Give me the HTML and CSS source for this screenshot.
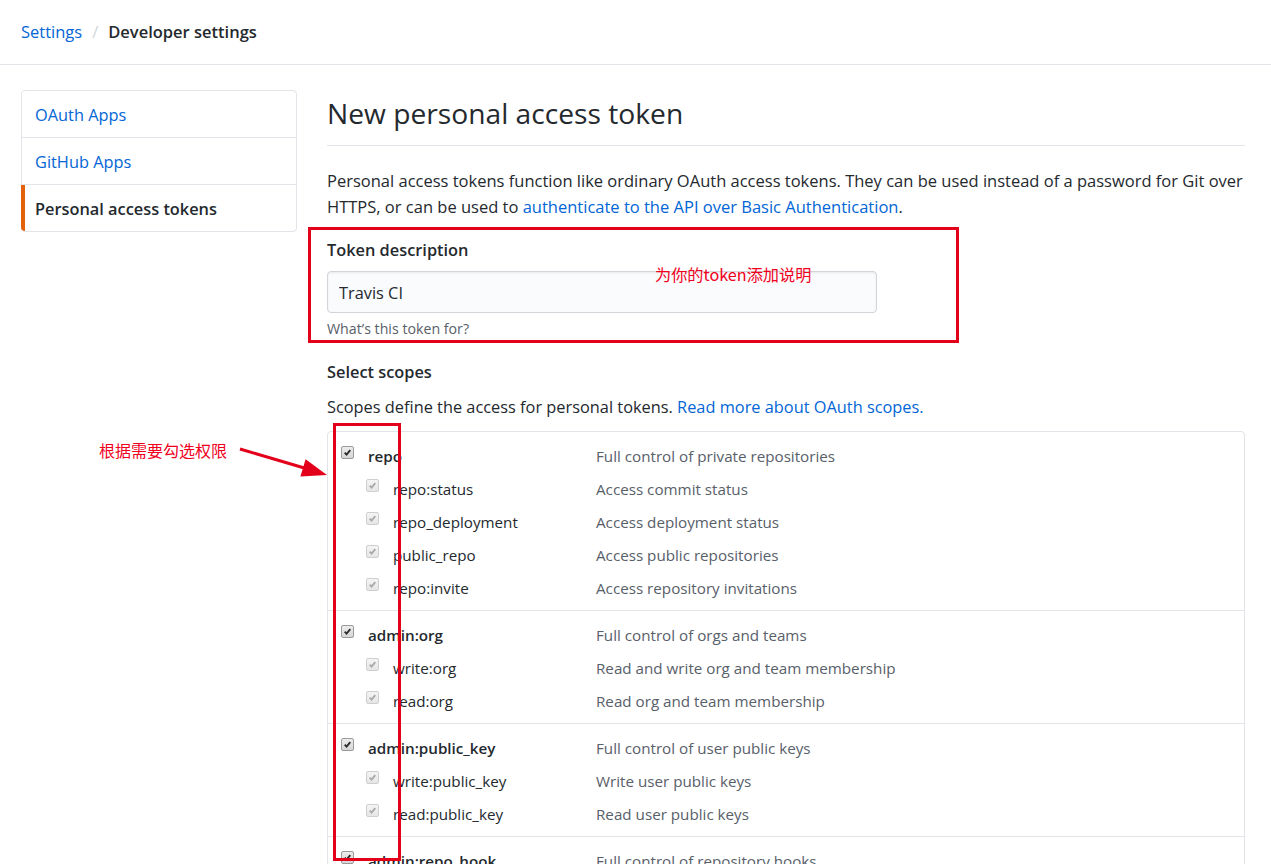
FILE: index.html
```html
<!DOCTYPE html>
<html lang="en">
<head>
<meta charset="utf-8">
<title>New personal access token</title>
<link rel="stylesheet" href="styles.css">
</head>
<body>
<div class="page">
  <header class="pagehead">
    <nav class="crumbs">
      <a class="crumb-link" href="#">Settings</a>
      <span class="crumb-sep">/</span>
      <strong class="crumb-current">Developer settings</strong>
    </nav>
  </header>

  <div class="layout">
    <nav class="menu">
      <a class="menu-item" href="#">OAuth Apps</a>
      <a class="menu-item" href="#">GitHub Apps</a>
      <a class="menu-item selected" href="#">Personal access tokens</a>
    </nav>

    <main class="main">
      <h2 class="subhead">New personal access token</h2>
      <p class="intro">Personal access tokens function like ordinary OAuth access tokens. They can be used instead of a password for Git over HTTPS, or can be used to <a href="#">authenticate to the API over Basic Authentication</a>.</p>

      <div class="form-group">
        <label class="form-label" for="desc">Token description</label>
        <input class="input" id="desc" type="text" value="Travis CI">
        <p class="note">What’s this token for?</p>
      </div>

      <h3 class="section-title">Select scopes</h3>
      <p class="scopes-intro">Scopes define the access for personal tokens. <a href="#">Read more about OAuth scopes.</a></p>

      <div class="scopes">
        <ul class="group">
          <li class="scope parent"><span class="scope-name"><span class="cb"><svg viewBox="0 0 13 13"><path d="M3.2 6.6 L5.4 8.9 L9.8 3.8"/></svg></span>repo</span><span class="desc">Full control of private repositories</span></li>
          <li class="scope child"><span class="scope-name"><span class="cb off"><svg viewBox="0 0 13 13"><path d="M3.2 6.6 L5.4 8.9 L9.8 3.8"/></svg></span>repo:status</span><span class="desc">Access commit status</span></li>
          <li class="scope child"><span class="scope-name"><span class="cb off"><svg viewBox="0 0 13 13"><path d="M3.2 6.6 L5.4 8.9 L9.8 3.8"/></svg></span>repo_deployment</span><span class="desc">Access deployment status</span></li>
          <li class="scope child"><span class="scope-name"><span class="cb off"><svg viewBox="0 0 13 13"><path d="M3.2 6.6 L5.4 8.9 L9.8 3.8"/></svg></span>public_repo</span><span class="desc">Access public repositories</span></li>
          <li class="scope child"><span class="scope-name"><span class="cb off"><svg viewBox="0 0 13 13"><path d="M3.2 6.6 L5.4 8.9 L9.8 3.8"/></svg></span>repo:invite</span><span class="desc">Access repository invitations</span></li>
        </ul>
        <ul class="group">
          <li class="scope parent"><span class="scope-name"><span class="cb"><svg viewBox="0 0 13 13"><path d="M3.2 6.6 L5.4 8.9 L9.8 3.8"/></svg></span>admin:org</span><span class="desc">Full control of orgs and teams</span></li>
          <li class="scope child"><span class="scope-name"><span class="cb off"><svg viewBox="0 0 13 13"><path d="M3.2 6.6 L5.4 8.9 L9.8 3.8"/></svg></span>write:org</span><span class="desc">Read and write org and team membership</span></li>
          <li class="scope child"><span class="scope-name"><span class="cb off"><svg viewBox="0 0 13 13"><path d="M3.2 6.6 L5.4 8.9 L9.8 3.8"/></svg></span>read:org</span><span class="desc">Read org and team membership</span></li>
        </ul>
        <ul class="group">
          <li class="scope parent"><span class="scope-name"><span class="cb"><svg viewBox="0 0 13 13"><path d="M3.2 6.6 L5.4 8.9 L9.8 3.8"/></svg></span>admin:public_key</span><span class="desc">Full control of user public keys</span></li>
          <li class="scope child"><span class="scope-name"><span class="cb off"><svg viewBox="0 0 13 13"><path d="M3.2 6.6 L5.4 8.9 L9.8 3.8"/></svg></span>write:public_key</span><span class="desc">Write user public keys</span></li>
          <li class="scope child"><span class="scope-name"><span class="cb off"><svg viewBox="0 0 13 13"><path d="M3.2 6.6 L5.4 8.9 L9.8 3.8"/></svg></span>read:public_key</span><span class="desc">Read user public keys</span></li>
        </ul>
        <ul class="group">
          <li class="scope parent"><span class="scope-name"><span class="cb"><svg viewBox="0 0 13 13"><path d="M3.2 6.6 L5.4 8.9 L9.8 3.8"/></svg></span>admin:repo_hook</span><span class="desc">Full control of repository hooks</span></li>
          <li class="scope child"><span class="scope-name"><span class="cb off"><svg viewBox="0 0 13 13"><path d="M3.2 6.6 L5.4 8.9 L9.8 3.8"/></svg></span>write:repo_hook</span><span class="desc">Write repository hooks</span></li>
        </ul>
      </div>
    </main>
  </div>

  <div class="annot box1"></div>
  <div class="annot box2"></div>
  <div class="annot note1">为你的token添加说明</div>
  <div class="annot note2">根据需要勾选权限</div>
  <svg class="annot arrow" viewBox="230 440 110 50" width="110" height="50">
    <line x1="240" y1="449" x2="306" y2="468.5"/>
    <polygon points="327,475 300.4,476.6 305.6,459.2"/>
  </svg>
</div>
</body>
</html>
```

FILE: styles.css
```css
html {
  overflow: hidden;
}

body {
  margin: 0;
  background: #fff;
  color: #24292e;
  font-family: "Open Sans", "Noto Sans", "Noto Sans CJK SC", sans-serif;
  font-size: 16.35px;
  line-height: 26px;
}

a {
  color: #0366d6;
  text-decoration: none;
}

.page {
  position: relative;
  min-height: 864px;
}

/* header */
.pagehead {
  height: 64px;
  border-bottom: 1px solid #e1e4e8;
  display: flex;
  align-items: center;
  padding: 0 21px;
}

.crumbs {
  display: flex;
  align-items: center;
  font-size: 16.5px;
}

.crumb-sep {
  color: #d1d5da;
  margin: 0 10px 0 10px;
}

.crumb-current {
  font-weight: 600;
  color: #24292e;
}

/* layout */
.layout {
  display: flex;
  align-items: flex-start;
  padding: 25px 26px 0 21px;
}

.menu {
  width: 276px;
  flex: none;
  margin-right: 30px;
  border: 1px solid #e1e4e8;
  border-radius: 4px;
  box-sizing: border-box;
}

.menu-item {
  display: block;
  height: 43px;
  line-height: 43px;
  padding: 3px 13px 0;
  border-bottom: 1px solid #e1e4e8;
  color: #0366d6;
}

.menu-item.selected {
  border-bottom: 0;
  margin-left: -1px;
  border-left: 4px solid #e36209;
  padding-left: 10px;
  color: #24292e;
  font-weight: 600;
  border-bottom-left-radius: 4px;
}

.main {
  flex: 1;
  min-width: 0;
}

.subhead {
  margin: 0 0 22px;
  padding: 1px 0 9px;
  border-bottom: 1px solid #e1e4e8;
  font-size: 28.2px;
  font-weight: 400;
  line-height: 45px;
}

.intro {
  margin: 0 0 17px;
  font-size: 16.5px;
}

.form-label {
  display: block;
  font-weight: 600;
  margin-bottom: 8px;
}

.input {
  display: block;
  width: 550px;
  height: 42px;
  box-sizing: border-box;
  padding: 2px 11px 0;
  border: 1px solid #d1d5da;
  border-radius: 4px;
  background: #fafbfc;
  box-shadow: inset 0 1px 2px rgba(27, 31, 35, 0.075);
  font-family: inherit;
  font-size: 16.35px;
  color: #24292e;
  outline: none;
}

.note {
  margin: 6px 0 0;
  font-size: 14.2px;
  line-height: 20px;
  color: #586069;
}

.section-title {
  margin: 20px 0 0;
  font-size: 16.35px;
  font-weight: 600;
  line-height: 26px;
}

.scopes-intro {
  margin: 9px 0 11px;
}

/* scopes */
.scopes {
  border: 1px solid #e1e4e8;
  border-radius: 4px;
  font-size: 15.2px;
}

.group {
  list-style: none;
  margin: 0;
  padding: 7px 0 6px;
}

.group + .group {
  border-top: 1px solid #e1e4e8;
}

.scope {
  display: flex;
  align-items: center;
  height: 33px;
}

.scope-name {
  width: 268px;
  flex: none;
  box-sizing: border-box;
  padding-left: 13px;
  display: flex;
  align-items: center;
  color: #24292e;
}

.parent .scope-name {
  font-weight: 600;
}

.child .scope-name {
  padding-left: 38px;
}

.desc {
  color: #586069;
}

.cb {
  width: 13px;
  height: 13px;
  flex: none;
  box-sizing: border-box;
  margin-right: 14px;
  margin-bottom: 7px;
  border: 1px solid #9a9a9a;
  border-radius: 2px;
  background: linear-gradient(#ececec, #d6d6d6);
  display: flex;
}

.cb svg {
  width: 11px;
  height: 11px;
}

.cb path {
  fill: none;
  stroke: #2b2b2b;
  stroke-width: 2.2;
}

.cb.off {
  border-color: #cfcfcf;
  background: linear-gradient(#f4f4f4, #e6e6e6);
}

.cb.off path {
  stroke: #a9a9a9;
}

/* annotations drawn over the screenshot */
.annot {
  position: absolute;
}

.box1 {
  left: 308px;
  top: 227px;
  width: 651px;
  height: 116px;
  box-sizing: border-box;
  border: 3px solid #e3001b;
}

.box2 {
  left: 333px;
  top: 423px;
  width: 68px;
  height: 438px;
  box-sizing: border-box;
  border: 3px solid #e3001b;
}

.note1 {
  left: 655px;
  top: 261px;
  font-family: "Noto Sans CJK SC", sans-serif;
  font-size: 16.2px;
  line-height: 26px;
  color: #f0001c;
}

.note2 {
  left: 99px;
  top: 437px;
  font-family: "Noto Sans CJK SC", sans-serif;
  font-size: 16px;
  line-height: 26px;
  color: #f0001c;
}

.arrow {
  left: 230px;
  top: 440px;
}

.arrow line {
  stroke: #e3001b;
  stroke-width: 3;
}

.arrow polygon {
  fill: #e3001b;
}
```
